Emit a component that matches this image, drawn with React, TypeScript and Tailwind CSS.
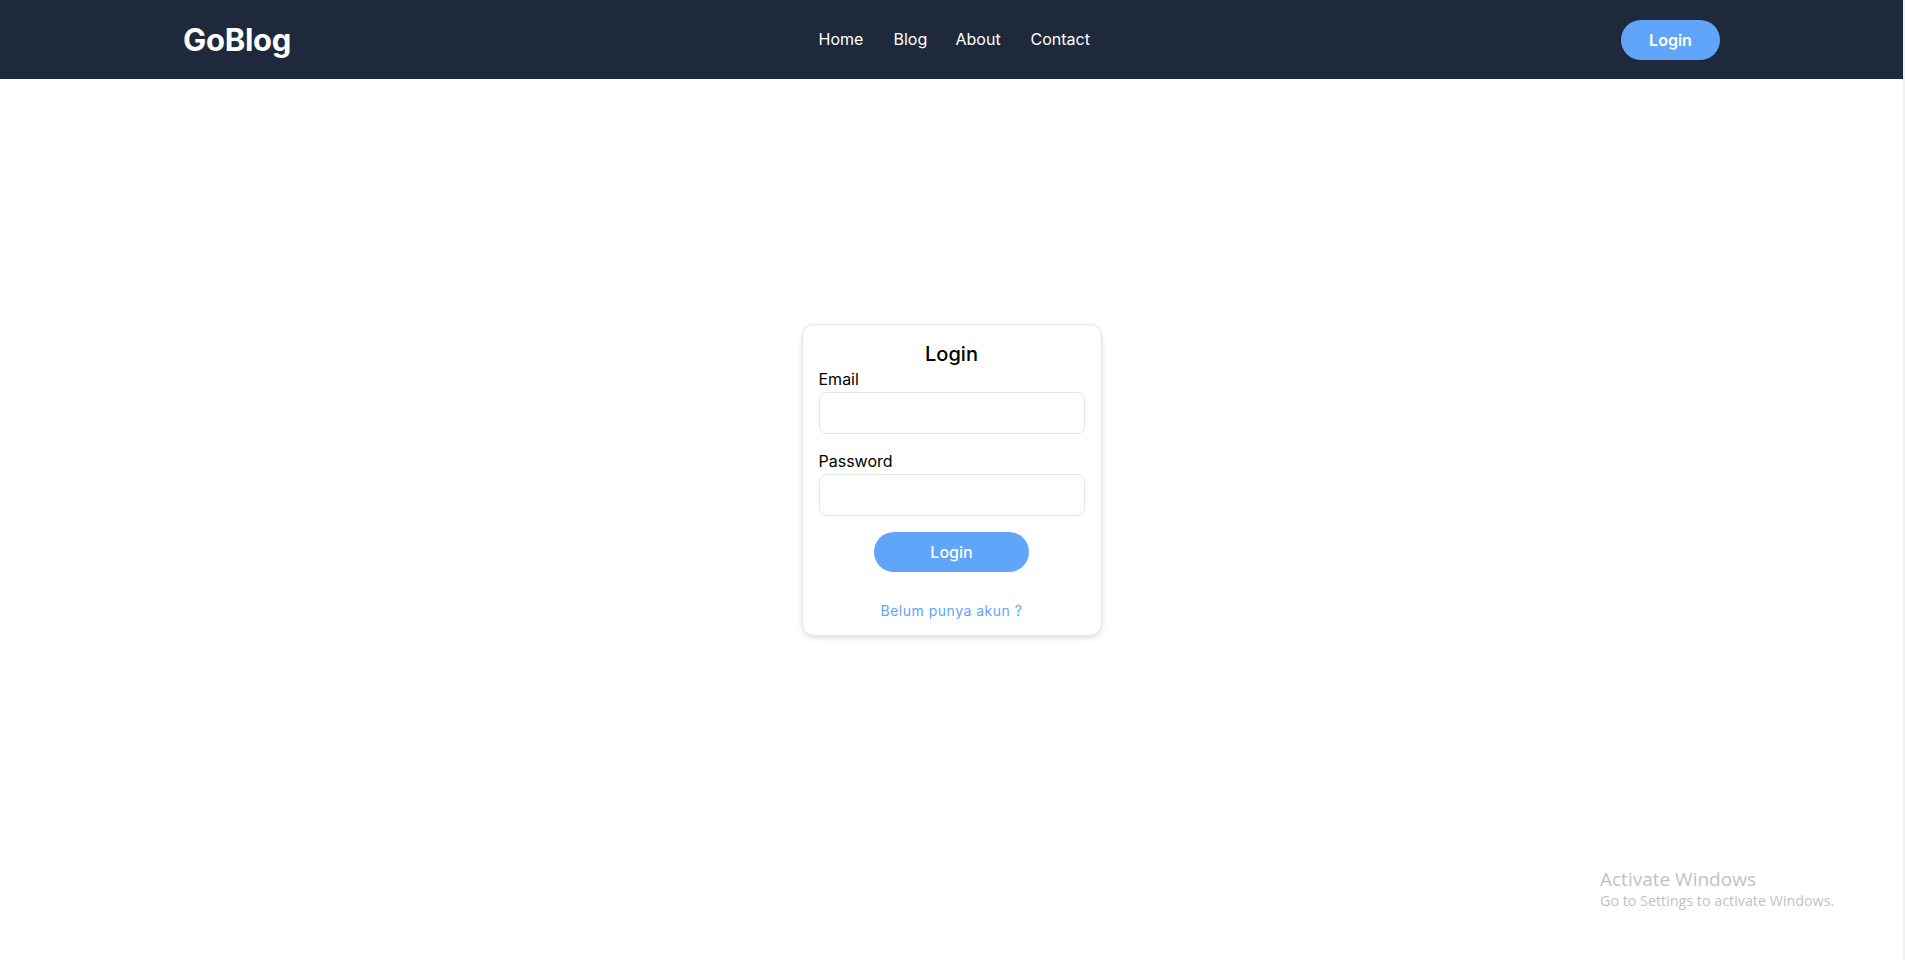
import React from "react";

export default function App() {
  const font = { fontFamily: "Inter, 'Noto Sans', sans-serif" };
  return (
    <div className="relative min-h-[960px] w-full bg-white" style={font}>
      <nav className="h-[79px] w-[1903px] bg-[#1e293b]">
        <div className="mx-auto flex h-full w-[1537px] items-center justify-between">
          <div className="mt-[2px] w-[109px] text-[31px] font-bold tracking-[-0.3px] text-white">GoBlog</div>
          <ul className="mb-[1px] flex items-center gap-[28px] text-[16px] text-white">
            <li className="w-[47px]">Home</li>
            <li className="w-[34px]">Blog</li>
            <li className="w-[47px]">About</li>
            <li className="w-[64px]">Contact</li>
          </ul>
          <button className="h-[40px] w-[99px] rounded-full bg-[#60a5fa] text-[16px] font-semibold text-white">
            Login
          </button>
        </div>
      </nav>
      <main className="flex w-[1903px] justify-center pt-[245px]">
        <div className="w-[300px] rounded-[12px] border border-[#e5e7eb] bg-white px-[16px] pb-[15px] pt-[14px] shadow-[0_2px_5px_rgba(0,0,0,0.12)]">
          <h2 className="text-center text-[20px] font-medium leading-[30px] text-black">Login</h2>
          <label className="block text-[16px] leading-[20px] text-black">Email</label>
          <input className="mt-[3px] block h-[42px] w-full rounded-[8px] border border-[#e5e7eb] px-3 outline-none" />
          <label className="mt-[17px] block text-[16px] leading-[20px] text-black">Password</label>
          <input type="password" className="mt-[3px] block h-[42px] w-full rounded-[8px] border border-[#e5e7eb] px-3 outline-none" />
          <div className="mt-[16px] flex justify-center">
            <button className="h-[40px] w-[155px] rounded-full bg-[#60a5fa] text-[16px] font-medium text-white">Login</button>
          </div>
          <p className="mt-[30px] text-center text-[14px] leading-[18px] tracking-[0.5px] text-[#60a5fa]">Belum punya akun ?</p>
        </div>
      </main>
      <div className="absolute left-[1600px] top-[866px] text-[#c2c2c2]" style={{ fontFamily: "'Open Sans', 'Noto Sans', sans-serif" }}>
        <div className="text-[19px] leading-[26px]">Activate Windows</div>
        <div className="text-[14.3px] leading-[18px]">Go to Settings to activate Windows.</div>
      </div>
      <div className="absolute right-0 top-0 h-[960px] w-[2px] bg-[#f0f0f0]" />
    </div>
  );
}
